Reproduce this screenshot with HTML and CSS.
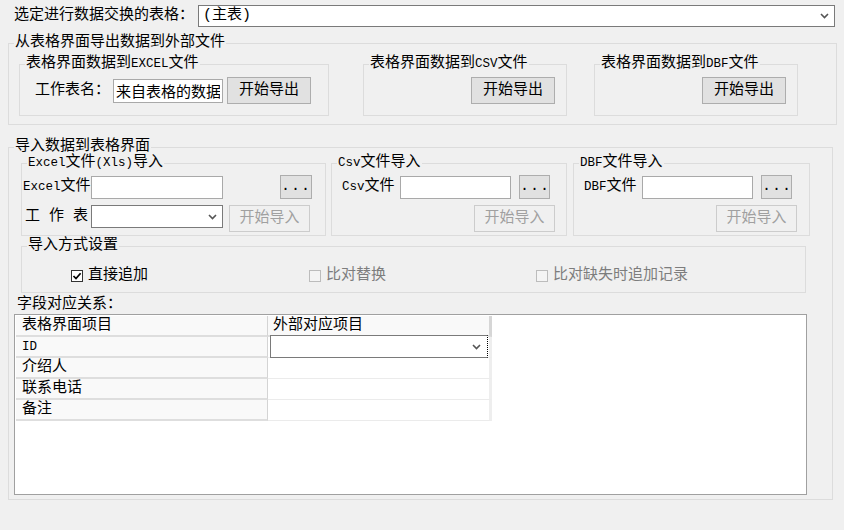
FILE: index.html
```html
<!DOCTYPE html>
<html lang="zh-CN">
<head>
    <meta charset="UTF-8">
    <meta name="viewport" content="width=device-width, initial-scale=1.0">
    <title>数据交换</title>
    <link rel="stylesheet" href="styles.css">
</head>
<body>

<div class="top">
    <label class="top-label">选定进行数据交换的表格：</label>
    <div class="combo combo-main">
        <span>(主表)</span>
        <svg class="arrow" width="9" height="6" viewBox="0 0 9 6"><path d="M1 1l3.5 3.5L8 1" fill="none" stroke="#555" stroke-width="1.6"/></svg>
    </div>
</div>

<fieldset class="group export">
    <legend>从表格界面导出数据到外部文件</legend>
    <div class="export-row">
        <fieldset class="group sub sub-excel">
            <legend>表格界面数据到<span class="en">EXCEL</span>文件</legend>
            <div class="line">
                <label class="sheet-label">工作表名：</label>
                <input class="text sheet-name" type="text" value="来自表格的数据">
                <button class="btn btn-export">开始导出</button>
            </div>
        </fieldset>
        <fieldset class="group sub sub-csv">
            <legend>表格界面数据到<span class="en">CSV</span>文件</legend>
            <div class="line line-end">
                <button class="btn btn-export">开始导出</button>
            </div>
        </fieldset>
        <fieldset class="group sub sub-dbf">
            <legend>表格界面数据到<span class="en">DBF</span>文件</legend>
            <div class="line line-end">
                <button class="btn btn-export">开始导出</button>
            </div>
        </fieldset>
    </div>
</fieldset>

<fieldset class="group import">
    <legend>导入数据到表格界面</legend>
    <div class="import-row">
        <fieldset class="group sub imp-excel">
            <legend><span class="en">Excel</span>文件<span class="en">(Xls)</span>导入</legend>
            <div class="line">
                <label class="file-label"><span class="en">Excel</span>文件</label>
                <input class="text file-input" type="text">
                <button class="btn btn-browse browse-excel">...</button>
            </div>
            <div class="line line-2">
                <label class="file-label sheet-pick">工 作 表</label>
                <div class="combo combo-sheet">
                    <span></span>
                    <svg class="arrow" width="9" height="6" viewBox="0 0 9 6"><path d="M1 1l3.5 3.5L8 1" fill="none" stroke="#555" stroke-width="1.6"/></svg>
                </div>
                <button class="btn btn-import" disabled>开始导入</button>
            </div>
        </fieldset>
        <fieldset class="group sub imp-csv">
            <legend><span class="en">Csv</span>文件导入</legend>
            <div class="line">
                <label class="file-label short"><span class="en">Csv</span>文件</label>
                <input class="text file-input small" type="text">
                <button class="btn btn-browse">...</button>
            </div>
            <div class="line line-2 line-end">
                <button class="btn btn-import" disabled>开始导入</button>
            </div>
        </fieldset>
        <fieldset class="group sub imp-dbf">
            <legend><span class="en">DBF</span>文件导入</legend>
            <div class="line">
                <label class="file-label short"><span class="en">DBF</span>文件</label>
                <input class="text file-input small" type="text">
                <button class="btn btn-browse">...</button>
            </div>
            <div class="line line-2 line-end">
                <button class="btn btn-import" disabled>开始导入</button>
            </div>
        </fieldset>
    </div>

    <fieldset class="group mode">
        <legend>导入方式设置</legend>
        <div class="checks">
            <label class="check check-1">
                <span class="box"><svg width="10" height="10" viewBox="0 0 10 10"><path d="M1.5 5l2.5 2.6L8.6 2.2" fill="none" stroke="#000" stroke-width="1.7"/></svg></span>直接追加
            </label>
            <label class="check check-2 off"><span class="box"></span>比对替换</label>
            <label class="check off"><span class="box"></span>比对缺失时追加记录</label>
        </div>
    </fieldset>

    <div class="map-title">字段对应关系：</div>
    <div class="map">
        <div class="grid">
            <div class="cell name">表格界面项目</div>
            <div class="cell value head">外部对应项目</div>

            <div class="cell name"><span class="en">ID</span></div>
            <div class="cell value editing">
                <div class="combo combo-cell">
                    <span></span>
                    <svg class="arrow" width="9" height="6" viewBox="0 0 9 6"><path d="M1 1l3.5 3.5L8 1" fill="none" stroke="#555" stroke-width="1.6"/></svg>
                </div>
            </div>

            <div class="cell name">介绍人</div>
            <div class="cell value"></div>

            <div class="cell name">联系电话</div>
            <div class="cell value"></div>

            <div class="cell name">备注</div>
            <div class="cell value"></div>
        </div>
    </div>
</fieldset>

</body>
</html>
```

FILE: styles.css
```css
body {
    margin: 0;
    width: 844px;
    height: 530px;
    overflow: hidden;
    background: #f0f0f0;
    font-family: "Liberation Mono", "Noto Sans CJK SC", monospace;
    font-size: 15px;
    line-height: 18px;
    color: #000;
}
.en {
    font-size: 12.5px;
}

/* верхняя строка */
.top {
    display: flex;
    align-items: center;
    padding: 5px 0 0 14px;
}
.top-label {
    width: 184px;
}
.combo {
    display: flex;
    align-items: center;
    justify-content: space-between;
    box-sizing: border-box;
    background: #fff;
    border: 1px solid #7a7a7a;
    padding: 0 5px 0 4px;
}
.combo-main {
    width: 637px;
    height: 22px;
}
.arrow {
    flex: none;
}

/* рамки групп */
.group {
    margin: 0;
    padding: 0;
    min-width: 0;
    box-sizing: border-box;
    border: 1px solid #dcdcdc;
}
.group > legend {
    margin-left: 5px;
    padding: 0 1px;
    line-height: 16px;
    white-space: nowrap;
}

.export {
    margin: 8px 0 0 8px;
    width: 829px;
    padding-bottom: 8px;
}
.export-row {
    display: flex;
    align-items: flex-start;
    padding-left: 10px;
    margin-top: 5px;
}
.export .sub {
    padding: 5px 0 11px;
}
.sub-excel { width: 310px; }
.sub-csv { width: 204px; margin-left: 34px; }
.sub-dbf { width: 204px; margin-left: 27px; }
.sub-excel .line {
    padding-left: 15px;
}

.line {
    display: flex;
    align-items: center;
    white-space: nowrap;
}
.line-end {
    justify-content: flex-end;
    padding-right: 11px;
}
.sheet-label {
    width: 78px;
}
.text {
    box-sizing: border-box;
    border: 1px solid #a9a9a9;
    background: #fff;
    font: inherit;
    padding: 0 2px;
    margin: 0;
    outline: none;
}
.sheet-name {
    width: 110px;
    height: 24px;
}
.btn {
    box-sizing: border-box;
    margin: 0;
    padding: 0;
    font: inherit;
    color: #000;
    background: #e1e1e1;
    border: 1px solid #adadad;
}
.btn-export {
    width: 84px;
    height: 27px;
    margin-left: 4px;
}

.import {
    margin: 14px 0 0 8px;
    width: 825px;
    padding-bottom: 4px;
}
.import-row {
    display: flex;
    align-items: flex-start;
    padding-left: 12px;
}
.import .sub {
    padding: 4px 0 3px;
}
.imp-excel { width: 305px; }
.imp-csv { width: 236px; margin-left: 5px; }
.imp-dbf { width: 237px; margin-left: 6px; }
.imp-excel .line {
    padding-left: 1px;
}
.imp-csv .line,
.imp-dbf .line {
    padding-left: 10px;
}
.imp-dbf .line-end {
    padding-right: 12px;
}

.line-2 {
    align-items: flex-start;
    margin-top: 6px;
    line-height: 23px;
}
.file-label {
    box-sizing: border-box;
    width: 68px;
}
.file-label.short {
    width: 58px;
}
.sheet-pick {
    padding-left: 2px;
}
.file-input {
    width: 132px;
    height: 23px;
}
.file-input.small {
    width: 111px;
}
.btn-browse {
    width: 31px;
    height: 24px;
    margin-left: 8px;
    letter-spacing: 1px;
}
.browse-excel {
    width: 32px;
    margin-left: 57px;
}
.combo-sheet {
    width: 132px;
    height: 23px;
}
.btn-import {
    width: 81px;
    height: 27px;
    margin-left: 6px;
}
.btn:disabled {
    background: #f0f0f0;
    border-color: #cccccc;
    color: #a0a0a0;
}

/* способ импорта */
.mode {
    margin: 2px 0 0 12px;
    width: 785px;
    padding: 12px 0 6px;
}
.checks {
    display: flex;
    line-height: 20px;
    padding-left: 49px;
}
.check {
    display: flex;
    align-items: center;
}
.check-1 { width: 238px; }
.check-2 { width: 227px; }
.box {
    display: flex;
    align-items: center;
    justify-content: center;
    box-sizing: border-box;
    width: 12px;
    height: 12px;
    margin-right: 5px;
    background: #fff;
    border: 1px solid #333;
}
.off {
    color: #7d7d7d;
}
.off .box {
    background: #f4f4f4;
    border-color: #bcbcbc;
}

/* таблица соответствия */
.map-title {
    margin-left: 8px;
    padding-top: 3px;
    line-height: 18px;
}
.map {
    margin-left: 5px;
    width: 793px;
    height: 181px;
    box-sizing: border-box;
    border: 1px solid #a0a0a0;
    background: #fff;
    padding: 1px;
}
.grid {
    display: grid;
    grid-template-columns: 252px 224px;
}
.cell {
    height: 21px;
    box-sizing: border-box;
    padding: 1px 0 0 6px;
    line-height: 18px;
}
.name {
    background: #f9f9f9;
    border-bottom: 2px solid #dedede;
    border-right: 1px solid #d4d4d4;
}
.value {
    background: #fff;
    border-bottom: 1px solid #ebebeb;
    border-right: 3px solid #eeeeee;
    padding-left: 5px;
}
.value.head {
    background: #f9f9f9;
    border-bottom: 2px solid #dedede;
    border-right-color: #d6d6d6;
}
.editing {
    position: relative;
}
.combo-cell {
    position: absolute;
    top: -2px;
    left: 2px;
    width: 218px;
    height: 23px;
    padding-right: 6px;
    border-right: 1px dotted #000;
}
```
